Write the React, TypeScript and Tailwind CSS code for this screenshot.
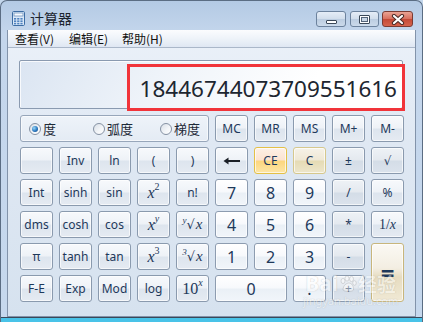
import React from "react";

type V = "fn" | "num" | "op" | "ce" | "c" | "eq";

const variant: Record<V, string> = {
  fn: "border-[#8a9aae] bg-[linear-gradient(180deg,#f7f9fc_0%,#eef2f7_48%,#dde5ee_52%,#e5ebf2_100%)]",
  num: "border-[#8d9cb0] bg-[linear-gradient(180deg,#ffffff_0%,#f7f9fc_48%,#eaf0f6_52%,#f1f5fa_100%)]",
  op: "border-[#8a9aae] bg-[linear-gradient(180deg,#eef2f6_0%,#e4e9ef_48%,#d4dde7_52%,#dbe3ec_100%)]",
  ce: "border-[#e4c046] bg-[linear-gradient(180deg,#fdf0e6_0%,#fce3d0_48%,#fcd67e_52%,#fde6a6_100%)]",
  c: "border-[#d6c88d] bg-[linear-gradient(180deg,#f6f2e8_0%,#efe8d5_48%,#e5dbb4_52%,#ede6cb_100%)]",
  eq: "border-[#c8b67c] bg-[linear-gradient(180deg,#fbf9f4_0%,#f3eee2_42%,#e6dcc0_58%,#f0e9d5_100%)]",
};

function Btn({
  v = "fn",
  className = "",
  children,
}: {
  v?: V;
  className?: string;
  children?: React.ReactNode;
}) {
  return (
    <div
      className={`flex items-center justify-center rounded-[3px] border text-[12px] leading-none text-[#1e395b] shadow-[inset_0_0_0_1px_rgba(255,255,255,0.65)] ${variant[v]} ${className}`}
    >
      {children}
    </div>
  );
}

const serif = "font-['Liberation_Serif','DejaVu_Serif',serif]";

function Radio({ on, label, w }: { on?: boolean; label: string; w: string }) {
  return (
    <div className={`flex items-center gap-[2px] ${w}`}>
      <span className="relative h-[12px] w-[12px] rounded-full border border-[#8591a3] bg-[linear-gradient(135deg,#d9dfe7_0%,#f4f6f9_60%,#ffffff_100%)]">
        {on && (
          <span className="absolute left-[2px] top-[2px] h-[6px] w-[6px] rounded-full bg-[radial-gradient(circle_at_35%_35%,#9ad8f8_0%,#2a78c0_55%,#123f78_100%)]" />
        )}
      </span>
      <span className="text-[13px] leading-none text-[#1e2a38]">{label}</span>
    </div>
  );
}

function Sup({ children, italic }: { children: React.ReactNode; italic?: boolean }) {
  return (
    <span className={`${serif} relative -top-[6px] text-[10px] ${italic ? "italic" : ""}`}>{children}</span>
  );
}

function Root({ idx }: { idx: string }) {
  return (
    <Btn>
      <span className={`${serif} relative -top-[4px] text-[9px] italic`}>{idx}</span>
      <span className="text-[13px] font-['DejaVu_Sans',sans-serif]">√</span>
      <span className={`${serif} ml-[1px] text-[15px] italic`}>x</span>
    </Btn>
  );
}

export default function App() {
  return (
    <div className="relative h-[322px] w-[423px] overflow-hidden bg-[#c4d7ec] font-['Noto_Sans','Noto_Sans_CJK_SC',sans-serif]">
      <div className="flex h-full flex-col rounded-t-[7px] border-x border-t border-[#5b6d83] bg-[linear-gradient(180deg,#b4cae4_0%,#c4d6ec_10%,#c6d8ed_100%)]">
        {/* title bar */}
        <div className="flex h-[29px] shrink-0 items-start pl-[11px] pr-[9px] pt-[10px]">
          <svg width="13" height="15" viewBox="0 0 13 15">
            <rect x="0.5" y="0.5" width="12" height="14" rx="1.2" fill="#dbe9f8" stroke="#3d6da4" />
            <rect x="2" y="2" width="9" height="3" fill="#f7fbff" stroke="#5f88b6" strokeWidth="0.7" />
            {[0, 1, 2].map((r) =>
              [0, 1, 2].map((c) => (
                <rect key={`${r}-${c}`} x={2 + c * 3.2} y={7 + r * 2.4} width="2.2" height="1.6" fill="#4f82bf" />
              ))
            )}
          </svg>
          <span className="ml-[5px] text-[14px] leading-[15px] text-[#1b2430] font-['Noto_Sans_CJK_SC',sans-serif]">
            计算器
          </span>
          <div className="ml-auto flex items-start">
            <div className="flex h-[16px] w-[30px] items-center justify-center rounded-[3px] border border-[#6c829d] bg-[linear-gradient(180deg,#e5edf7_0%,#d2deec_48%,#bccde1_52%,#cbdaeb_100%)]">
              <div className="mt-[5px] h-[4px] w-[11px] rounded-[1px] border border-[#3a4858] bg-white" />
            </div>
            <div className="ml-[4px] flex h-[16px] w-[29px] items-center justify-center rounded-[3px] border border-[#6c829d] bg-[linear-gradient(180deg,#e5edf7_0%,#d2deec_48%,#bccde1_52%,#cbdaeb_100%)]">
              <div className="flex h-[9px] w-[11px] items-center justify-center rounded-[1px] border border-[#3a4858] bg-white">
                <div className="h-[5px] w-[7px] border border-[#55657a] bg-[#c8d6e6]" />
              </div>
            </div>
            <div className="ml-[3px] flex h-[16px] w-[31px] items-center justify-center rounded-[3px] border border-[#7b3b33] bg-[linear-gradient(180deg,#eaa394_0%,#d9705f_48%,#c44a37_52%,#d6634c_100%)]">
              <svg width="14" height="11" viewBox="0 0 14 11">
                <path d="M3 2 L11 9 M11 2 L3 9" stroke="#4a2a26" strokeWidth="4.2" strokeLinecap="round" />
                <path d="M3 2 L11 9 M11 2 L3 9" stroke="#ffffff" strokeWidth="2.2" strokeLinecap="round" />
              </svg>
            </div>
          </div>
        </div>

        {/* client */}
        <div className="mx-[6px] flex h-[287px] shrink-0 flex-col border-x border-b border-[#8293aa] bg-[linear-gradient(180deg,#ebf1f9_0%,#dfe8f3_40%,#d6e2ef_100%)]">
          {/* menu */}
          <div className="flex h-[18px] shrink-0 items-center border-b border-[#aab7c9] bg-[linear-gradient(180deg,#fbfcfe_0%,#eef3f9_50%,#dfe7f3_100%)] pl-[7px] text-[12px] leading-none text-[#111] font-['Noto_Sans_CJK_SC',sans-serif]">
            <span className="w-[54px]">查看(V)</span>
            <span className="w-[53px]">编辑(E)</span>
            <span>帮助(H)</span>
          </div>

          <div className="flex flex-col pl-[11px] pt-[12px]">
            {/* display */}
            <div className="flex h-[49px] w-[384px] justify-end rounded-[2px] border border-[#8a9ab0] bg-[linear-gradient(120deg,#dbe5f2_0%,#eef3f9_35%,#ffffff_75%)] pr-[5px] pt-[16px] shadow-[inset_1px_1px_0_rgba(255,255,255,0.8)]">
              <span className="text-[22.5px] leading-[23px] text-[#1d2630]">18446744073709551616</span>
            </div>

            {/* keypad */}
            <div className="ml-[1px] mt-[6px] grid grid-cols-[repeat(10,33px)] grid-rows-[repeat(6,27px)] gap-x-[6px] gap-y-[5px]">
              <div className="col-span-5 flex items-center rounded-[3px] border border-[#97a6ba] bg-[linear-gradient(180deg,#eef3f9_0%,#e4ebf4_100%)] pl-[8px] shadow-[inset_0_0_0_1px_rgba(255,255,255,0.6)] font-['Noto_Sans_CJK_SC',sans-serif]">
                <Radio on label="度" w="w-[64px]" />
                <Radio label="弧度" w="w-[67px]" />
                <Radio label="梯度" w="w-[48px]" />
              </div>
              <Btn>MC</Btn>
              <Btn>MR</Btn>
              <Btn>MS</Btn>
              <Btn>M+</Btn>
              <Btn>M-</Btn>

              <Btn />
              <Btn>Inv</Btn>
              <Btn>ln</Btn>
              <Btn>(</Btn>
              <Btn>)</Btn>
              <Btn>
                <svg width="18" height="8" viewBox="0 0 18 8">
                  <path d="M2 4 L17 4" stroke="#1a1f26" strokeWidth="2" />
                  <path d="M0.5 4 L5.5 0.5 L5.5 7.5 Z" fill="#1a1f26" />
                </svg>
              </Btn>
              <Btn v="ce">CE</Btn>
              <Btn v="c">C</Btn>
              <Btn v="op">±</Btn>
              <Btn v="op">
                <span className="text-[12px] font-['DejaVu_Sans',sans-serif]">√</span>
              </Btn>

              <Btn>Int</Btn>
              <Btn>sinh</Btn>
              <Btn>sin</Btn>
              <Btn>
                <span className={`${serif} text-[16px] italic`}>x</span>
                <Sup>2</Sup>
              </Btn>
              <Btn>n!</Btn>
              <Btn v="num" className="text-[16px]">7</Btn>
              <Btn v="num" className="text-[16px]">8</Btn>
              <Btn v="num" className="text-[16px]">9</Btn>
              <Btn v="op">/</Btn>
              <Btn>%</Btn>

              <Btn>dms</Btn>
              <Btn>cosh</Btn>
              <Btn>cos</Btn>
              <Btn>
                <span className={`${serif} text-[16px] italic`}>x</span>
                <Sup italic>y</Sup>
              </Btn>
              <Root idx="y" />
              <Btn v="num" className="text-[16px]">4</Btn>
              <Btn v="num" className="text-[16px]">5</Btn>
              <Btn v="num" className="text-[16px]">6</Btn>
              <Btn v="op">*</Btn>
              <Btn>
                <span className={`${serif} text-[14px]`}>1/</span>
                <span className={`${serif} text-[14px] italic`}>x</span>
              </Btn>

              <Btn>π</Btn>
              <Btn>tanh</Btn>
              <Btn>tan</Btn>
              <Btn>
                <span className={`${serif} text-[16px] italic`}>x</span>
                <Sup>3</Sup>
              </Btn>
              <Root idx="3" />
              <Btn v="num" className="text-[16px]">1</Btn>
              <Btn v="num" className="text-[16px]">2</Btn>
              <Btn v="num" className="text-[16px]">3</Btn>
              <Btn v="op">-</Btn>
              <Btn v="eq" className="row-span-2 text-[24px] font-bold">=</Btn>

              <Btn>F-E</Btn>
              <Btn>Exp</Btn>
              <Btn>Mod</Btn>
              <Btn>log</Btn>
              <Btn>
                <span className={`${serif} text-[16px]`}>10</span>
                <Sup italic>x</Sup>
              </Btn>
              <Btn v="num" className="col-span-2 text-[16px]">0</Btn>
              <Btn v="num" className="text-[16px]">.</Btn>
              <Btn v="op">+</Btn>
            </div>
          </div>
        </div>
        <div className="h-[1px] shrink-0 bg-[#3a4859]" />
        <div className="h-[4px] shrink-0 bg-[#49c3e8]" />
      </div>

      {/* red annotation box */}
      <div className="pointer-events-none absolute left-[127px] top-[64px] h-[47px] w-[278px] border-[3px] border-[#f1343a]" />

      {/* watermark */}
      <div className="pointer-events-none absolute left-[303px] top-[273px] flex flex-col items-center opacity-45">
        <div className="flex items-center text-white [text-shadow:0_0_1px_#7a7a7a]">
          <span className="text-[21px] font-bold leading-none">Bai</span>
          <svg width="18" height="18" viewBox="0 0 18 18" className="mx-[1px]">
            <g fill="#ffffff" stroke="#8a8a8a" strokeWidth="0.6">
              <ellipse cx="4" cy="6" rx="2" ry="2.6" />
              <ellipse cx="8" cy="3.5" rx="2" ry="2.6" />
              <ellipse cx="12.5" cy="4" rx="2" ry="2.6" />
              <ellipse cx="15.5" cy="8" rx="1.8" ry="2.3" />
              <path d="M4 15 C4 10 8 8 10 8 C13 8 15 12 14.5 15 C13 17 6 17 4 15 Z" />
            </g>
          </svg>
          <span className="text-[19px] font-bold leading-none font-['Noto_Sans_CJK_SC',sans-serif]">经验</span>
        </div>
        <span className="text-[11px] leading-[13px] text-white [text-shadow:0_0_1px_#7a7a7a]">jingyan.baidu.com</span>
      </div>
    </div>
  );
}
